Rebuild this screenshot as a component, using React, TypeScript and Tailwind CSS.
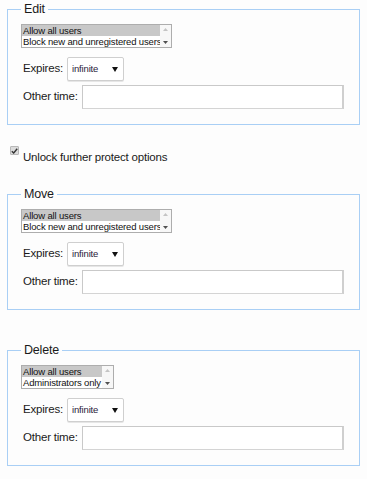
const FONT = "font-['Liberation_Sans',Arial,sans-serif]";

type Section = {
  title: string;
  options: string[];
  listWidth: string;
};

const SECTIONS: Section[] = [
  { title: 'Edit', options: ['Allow all users', 'Block new and unregistered users'], listWidth: 'w-[151px]' },
  { title: 'Move', options: ['Allow all users', 'Block new and unregistered users'], listWidth: 'w-[151px]' },
  { title: 'Delete', options: ['Allow all users', 'Administrators only'], listWidth: 'w-[93px]' },
];

function ListBox({ options, width }: { options: string[]; width: string }) {
  return (
    <div className={`flex ${width} h-[24px] border border-[#adadad] bg-white`}>
      <div className="flex min-w-0 flex-1 flex-col">
        {options.map((opt, i) => (
          <div
            key={opt}
            className={`h-[11px] overflow-hidden whitespace-nowrap pl-[1px] text-[9.5px] leading-[11px] tracking-[-0.15px] text-[#111] ${
              i === 0 ? 'bg-[#c8c8c8]' : ''
            }`}
          >
            {opt}
          </div>
        ))}
      </div>
      <div className="flex w-[11px] flex-col items-center justify-between bg-[#f7f7f7] py-[3px]">
        <svg width="5" height="3" viewBox="0 0 5 3">
          <path d="M0 3 L2.5 0 L5 3 Z" fill="#c4c4c4" />
        </svg>
        <svg width="5" height="3" viewBox="0 0 5 3">
          <path d="M0 0 L2.5 3 L5 0 Z" fill="#505050" />
        </svg>
      </div>
    </div>
  );
}

function ProtectFieldset({ section }: { section: Section }) {
  return (
    <fieldset className="mx-[7px] border border-[#a9cff5] pb-[15px] pl-[13px] pr-[15px]">
      <legend className="px-[3px] text-[12.5px] leading-[15px] tracking-[-0.2px] text-[#1a1a1a]">
        {section.title}
      </legend>
      <div className="mt-[7px]">
        <ListBox options={section.options} width={section.listWidth} />
      </div>
      <div className="mt-[9px] flex items-center">
        <span className="ml-[2px] text-[11.5px] tracking-[-0.2px] text-[#1a1a1a]">Expires:</span>
        <div className="ml-[4px] flex h-[24px] w-[57px] items-center justify-between rounded-[2px] border border-[#cfcfcf] bg-white pl-[4px] pr-[5px] shadow-[0_1px_0_#e6e6e6]">
          <span className="text-[9.5px] tracking-[-0.15px] text-[#2a1a3a]">infinite</span>
          <svg width="6" height="5" viewBox="0 0 6 5">
            <path d="M0 0 L6 0 L3 5 Z" fill="#111" />
          </svg>
        </div>
      </div>
      <div className="mt-[4px] flex items-center">
        <span className="ml-[2px] text-[11.5px] tracking-[-0.2px] text-[#1a1a1a]">Other time:</span>
        <input
          type="text"
          className="ml-[4px] h-[24px] flex-1 border border-[#c9c9c9] border-b-[#d4d4d4] border-r-2 border-r-[#cfcfcf] bg-white outline-none"
        />
      </div>
    </fieldset>
  );
}

export default function App() {
  return (
    <div className={`${FONT} min-h-[479px] w-[367px] bg-[#fdfdfd] pt-[2px]`}>
      <ProtectFieldset section={SECTIONS[0]} />

      <div className="mt-[21px] flex items-start pl-[10px]">
        <div className="flex h-[9px] w-[9px] items-center justify-center rounded-[1px] border border-[#b8b8b8] bg-[#dcdcdc]">
          <svg width="7" height="6" viewBox="0 0 7 6">
            <path d="M0.8 3.2 L2.7 5 L6.2 0.8" fill="none" stroke="#333" strokeWidth="1.4" />
          </svg>
        </div>
        <span className="ml-[4px] mt-[4px] text-[11.5px] leading-[15px] tracking-[-0.2px] text-[#1a1a1a]">
          Unlock further protect options
        </span>
      </div>

      <div className="mt-[22px]">
        <ProtectFieldset section={SECTIONS[1]} />
      </div>

      <div className="mt-[33px]">
        <ProtectFieldset section={SECTIONS[2]} />
      </div>
    </div>
  );
}
